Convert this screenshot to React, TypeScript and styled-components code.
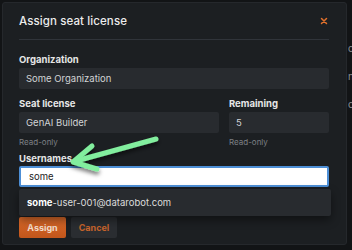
import styled, { createGlobalStyle } from "styled-components";

const Global = createGlobalStyle`
  html, body { margin: 0; padding: 0; background: #121416; }
  body { font-family: Inter, "Noto Sans", sans-serif; }
  * { box-sizing: border-box; }
`;

const Page = styled.div`
  position: relative;
  width: 352px;
  height: 250px;
  overflow: hidden;
  display: flex;
  padding: 2px 0 0 2px;
  background: #121416;
`;

const Modal = styled.div`
  width: 345px;
  height: 243px;
  flex-shrink: 0;
  background: #1c1f22;
  border: 1px solid #25282c;
  border-radius: 3px;
  padding: 0 17px 0 16px;
  display: flex;
  flex-direction: column;
  position: relative;
`;

const Header = styled.div`
  height: 38px;
  display: flex;
  align-items: center;
  justify-content: space-between;
  border-bottom: 1px solid #30343a;
  margin-top: -1px;
`;

const Title = styled.h1`
  margin: 0;
  font-size: 11.5px;
  font-weight: 500;
  color: #ececec;
  letter-spacing: 0.1px;
`;

const Close = styled.button`
  border: 0;
  background: none;
  padding: 0;
  width: 8px;
  height: 8px;
  display: flex;
  margin-right: 1px;
`;

const Body = styled.div`
  padding-top: 13px;
  display: flex;
  flex-direction: column;
  position: relative;
`;

const Field = styled.div<{ $gap?: number }>`
  display: flex;
  flex-direction: column;
  margin-top: ${(p) => p.$gap ?? 0}px;
`;

const Label = styled.label<{ $tight?: boolean }>`
  font-size: 9.5px;
  font-weight: 700;
  line-height: 14px;
  color: #e6e6e6;
  margin-bottom: ${(p) => (p.$tight ? 0 : 1)}px;
`;

const Input = styled.div<{ $focus?: boolean }>`
  height: 21px;
  display: flex;
  align-items: center;
  padding: 0 ${(p) => (p.$focus ? 8 : 7)}px;
  font-size: 9.5px;
  color: ${(p) => (p.$focus ? "#222" : "#d2d4d6")};
  background: ${(p) => (p.$focus ? "#ffffff" : "#282b2f")};
  border: ${(p) => (p.$focus ? "2px solid #4d8fd6" : "0")};
  border-radius: 2px;
`;

const Helper = styled.div`
  font-size: 8px;
  line-height: 12px;
  color: #7c8085;
  margin-top: 3px;
`;

const Row = styled.div`
  display: grid;
  grid-template-columns: 200px 100px;
  column-gap: 10px;
  margin-top: 8px;
`;

const Menu = styled.div`
  position: absolute;
  left: 0;
  top: 149px;
  width: 312px;
  height: 27px;
  background: #282b2f;
  border-radius: 2px;
  box-shadow: 0 4px 10px rgba(0, 0, 0, 0.45);
  display: flex;
  align-items: center;
  padding-left: 8px;
  font-size: 9.5px;
  color: #dcdcdc;
  z-index: 2;
  b { color: #ffffff; font-weight: 700; }
`;

const Footer = styled.div`
  display: flex;
  gap: 5px;
  margin-top: 30px;
`;

const Button = styled.button<{ $primary?: boolean }>`
  height: 21px;
  width: ${(p) => (p.$primary ? 47 : 46)}px;
  border: 0;
  border-radius: 2px;
  font-family: inherit;
  font-size: 9px;
  font-weight: 700;
  padding: 0;
  color: ${(p) => (p.$primary ? "#f3dccb" : "#c8642b")};
  background: ${(p) =>
    p.$primary ? "linear-gradient(#d9692a, #c2561b)" : "#2a2d31"};
`;

const BackText = styled.div`
  display: flex;
  flex-direction: column;
  padding: 40px 0 0 1px;
  gap: 16px;
  font-size: 10px;
  line-height: 12px;
  color: #8a8d91;
  white-space: nowrap;
`;

const Arrow = styled.svg`
  position: absolute;
  left: 0;
  top: 0;
  pointer-events: none;
  z-index: 5;
`;

export default function App() {
  return (
    <>
      <Global />
      <Page>
        <Modal>
          <Header>
            <Title>Assign seat license</Title>
            <Close aria-label="Close">
              <svg width="8" height="8" viewBox="0 0 8 8">
                <path d="M1.5 1.5 L6.5 6.5 M6.5 1.5 L1.5 6.5" stroke="#e2712c" strokeWidth="1.5" strokeLinecap="round" />
              </svg>
            </Close>
          </Header>
          <Body>
            <Field>
              <Label>Organization</Label>
              <Input>Some Organization</Input>
            </Field>
            <Row>
              <Field>
                <Label>Seat license</Label>
                <Input>GenAI Builder</Input>
                <Helper>Read-only</Helper>
              </Field>
              <Field>
                <Label>Remaining</Label>
                <Input>5</Input>
                <Helper>Read-only</Helper>
              </Field>
            </Row>
            <Field $gap={4}>
              <Label $tight>Usernames</Label>
              <Input $focus>some</Input>
            </Field>
            <Menu>
              <span>
                <b>some</b>-user-001@datarobot.com
              </span>
            </Menu>
            <Footer>
              <Button $primary>Assign</Button>
              <Button>Cancel</Button>
            </Footer>
          </Body>
        </Modal>
        <BackText>
          <span>or</span>
          <span>nf</span>
          <span>c</span>
        </BackText>
        <Arrow width="352" height="250" viewBox="0 0 352 250">
          <defs>
            <filter id="sh" x="-20%" y="-20%" width="140%" height="160%">
              <feDropShadow dx="0" dy="3" stdDeviation="2" floodColor="#000" floodOpacity="0.55" />
            </filter>
          </defs>
          <g filter="url(#sh)" stroke="#82ee9e" strokeWidth="5" strokeLinecap="round" strokeLinejoin="round" fill="none">
            <path d="M156 139 L76 161" />
            <path d="M92 146 L73 162 L97 169" />
          </g>
        </Arrow>
      </Page>
    </>
  );
}
